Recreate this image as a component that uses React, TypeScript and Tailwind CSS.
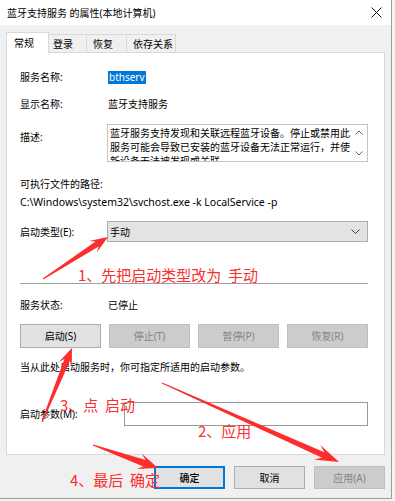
import React from 'react';

type Pt = [number, number];

// tapered annotation arrow, thin at the tail and wide at the head
const arrowPoints = (tail: Pt, tip: Pt, hl: number, hw: number, nw: number, tw = 1.2) => {
  const dx = tip[0] - tail[0];
  const dy = tip[1] - tail[1];
  const len = Math.hypot(dx, dy);
  const ux = dx / len;
  const uy = dy / len;
  const nx = -uy;
  const ny = ux;
  const at = (t: number, w: number): string =>
    `${(tip[0] - ux * t + nx * w).toFixed(1)},${(tip[1] - uy * t + ny * w).toFixed(1)}`;
  return [
    at(len, tw / 2),
    at(hl * 0.72, nw / 2),
    at(hl, hw / 2),
    at(0, 0),
    at(hl, -hw / 2),
    at(hl * 0.72, -nw / 2),
    at(len, -tw / 2),
  ].join(' ');
};

const arrows: { tail: Pt; tip: Pt; hl: number; hw: number; nw: number }[] = [
  { tail: [43, 279], tip: [108, 237], hl: 18, hw: 14, nw: 6 },
  { tail: [42, 422], tip: [72, 348], hl: 18, hw: 14, nw: 6 },
  { tail: [162, 383], tip: [339, 462], hl: 24, hw: 16, nw: 6 },
  { tail: [93, 445], tip: [158, 468], hl: 20, hw: 16, nw: 7 },
];

const Row = ({ label, children }: { label: string; children: React.ReactNode }) => (
  <div className="flex items-center h-[16px]">
    <div className="w-[88px] shrink-0">{label}</div>
    {children}
  </div>
);

const SvcButton = ({ label, disabled }: { label: string; disabled?: boolean }) => (
  <div
    className={
      disabled
        ? 'h-[24px] flex items-center justify-center bg-[#cccccc] border border-[#bfbfbf] text-[#838383]'
        : 'h-[24px] flex items-center justify-center bg-[#e1e1e1] border border-[#adadad]'
    }
  >
    {label}
  </div>
);

const App: React.FC = () => {
  return (
    <div className="relative w-[395px] h-[501px] overflow-hidden bg-[#f4f4f4] text-[10px] leading-[14px] text-black font-['Noto_Sans','Noto_Sans_CJK_SC',sans-serif]">
      <div className="w-[392px] h-[499px] flex flex-col bg-[#f0f0f0] border-r border-b border-[#9c9c9c]">
        {/* title bar */}
        <div className="h-[25px] shrink-0 bg-white flex items-center justify-between pl-[7px] pr-[8px]">
          <span>蓝牙支持服务 的属性(本地计算机)</span>
          <svg width="11" height="11" viewBox="0 0 11 11" className="mr-[1px]">
            <path d="M0.5 0.5 L10.5 10.5 M10.5 0.5 L0.5 10.5" stroke="#111" strokeWidth="1" fill="none" />
          </svg>
        </div>

        <div className="flex-1 flex flex-col px-[6px] pt-[7px]">
          {/* tabs */}
          <div className="flex items-end h-[21px] relative z-10">
            <div className="h-[21px] w-[43px] bg-white border border-b-0 border-[#d9d9d9] flex items-center pl-[7px]">常规</div>
            <div className="h-[19px] w-[38px] bg-[#f0f0f0] border border-l-0 border-[#d9d9d9] flex items-center pl-[4px]">登录</div>
            <div className="h-[19px] w-[40px] bg-[#f0f0f0] border border-l-0 border-[#d9d9d9] flex items-center pl-[6px]">恢复</div>
            <div className="h-[19px] w-[49px] bg-[#f0f0f0] border border-l-0 border-[#d9d9d9] flex items-center pl-[6px]">依存关系</div>
          </div>

          {/* tab panel */}
          <div className="h-[403px] w-[379px] -mt-px bg-white border border-[#d9d9d9] pl-[13px] pr-[16px] pt-[16px] flex flex-col">
            <Row label="服务名称:">
              <span className="bg-[#0078d7] text-white px-[1px] leading-[13px]">bthserv</span>
            </Row>
            <div className="mt-[11px]">
              <Row label="显示名称:">
                <span>蓝牙支持服务</span>
              </Row>
            </div>

            <div className="mt-[12px] flex">
              <div className="w-[87px] shrink-0 mt-[6px]">描述:</div>
              <div className="flex-1 h-[38px] border border-[#c4c4c4] flex overflow-hidden">
                <div className="flex-1 pl-[2px] pt-[1px] whitespace-nowrap leading-[14px] overflow-hidden">
                  <div>蓝牙服务支持发现和关联远程蓝牙设备。停止或禁用此</div>
                  <div>服务可能会导致已安装的蓝牙设备无法正常运行，并使</div>
                  <div>新设备无法被发现或关联</div>
                </div>
                <div className="w-[16px] shrink-0 flex flex-col items-center justify-between py-[5px]">
                  <svg width="8" height="5" viewBox="0 0 8 5">
                    <path d="M0.5 4.5 L4 1 L7.5 4.5" stroke="#606060" fill="none" />
                  </svg>
                  <svg width="8" height="5" viewBox="0 0 8 5">
                    <path d="M0.5 0.5 L4 4 L7.5 0.5" stroke="#606060" fill="none" />
                  </svg>
                </div>
              </div>
            </div>

            <div className="mt-[14px] h-[16px] flex items-center">可执行文件的路径:</div>
            <div className="mt-[2px] h-[16px] flex items-center text-[10.5px]">C:\Windows\system32\svchost.exe -k LocalService -p</div>

            <div className="mt-[11px] flex items-center">
              <div className="w-[87px] shrink-0">启动类型(E):</div>
              <div className="flex-1 h-[21px] bg-[#e3e3e3] border border-[#adadad] flex items-center justify-between pl-[2px] pr-[7px]">
                <span>手动</span>
                <svg width="9" height="5" viewBox="0 0 9 5">
                  <path d="M0.5 0.5 L4.5 4.5 L8.5 0.5" stroke="#404040" fill="none" />
                </svg>
              </div>
            </div>

            <div className="mt-[41px] h-px bg-[#a0a0a0]" />

            <div className="mt-[13px]">
              <Row label="服务状态:">
                <span>已停止</span>
              </Row>
            </div>

            <div className="mt-[11px] grid grid-cols-4 gap-x-[8px]">
              <SvcButton label="启动(S)" />
              <SvcButton label="停止(T)" disabled />
              <SvcButton label="暂停(P)" disabled />
              <SvcButton label="恢复(R)" disabled />
            </div>

            <div className="mt-[11px] h-[16px] flex items-center">当从此处启动服务时，你可指定所适用的启动参数。</div>

            <div className="mt-[27px] flex items-center">
              <div className="w-[104px] shrink-0">启动参数(M):</div>
              <div className="flex-1 h-[24px] bg-white border border-[#9a9a9a]" />
            </div>
          </div>

          {/* dialog buttons */}
          <div className="mt-[11px] flex justify-end gap-[9px]">
            <div className="w-[71px] h-[23px] bg-[#e1e1e1] border-2 border-[#0078d7] flex items-center justify-center font-medium">确定</div>
            <div className="w-[71px] h-[23px] bg-[#e1e1e1] border border-[#adadad] flex items-center justify-center">取消</div>
            <div className="w-[71px] h-[23px] bg-[#cccccc] border border-[#bfbfbf] text-[#838383] flex items-center justify-center">应用(A)</div>
          </div>
        </div>
      </div>

      {/* red annotations over the dialog */}
      <svg className="absolute left-0 top-0 pointer-events-none" width="395" height="501">
        {arrows.map((a, i) => (
          <polygon key={i} points={arrowPoints(a.tail, a.tip, a.hl, a.hw, a.nw)} fill="#fb2d2d" />
        ))}
      </svg>
      <div className="absolute left-[78px] top-[265px] text-[15px] leading-[20px] text-[#fb2d2d] whitespace-pre font-['Noto_Sans_CJK_SC',sans-serif]">1、先把启动类型改为  手动</div>
      <div className="absolute left-[60px] top-[395px] text-[15px] leading-[20px] text-[#fb2d2d] whitespace-pre font-['Noto_Sans_CJK_SC',sans-serif]">3、点  启动</div>
      <div className="absolute left-[198px] top-[421px] text-[15px] leading-[20px] text-[#fb2d2d] whitespace-pre font-['Noto_Sans_CJK_SC',sans-serif]">2、应用</div>
      <div className="absolute left-[70px] top-[470px] text-[15px] leading-[20px] text-[#fb2d2d] whitespace-pre font-['Noto_Sans_CJK_SC',sans-serif]">4、最后  确定</div>
    </div>
  );
};

export default App;
